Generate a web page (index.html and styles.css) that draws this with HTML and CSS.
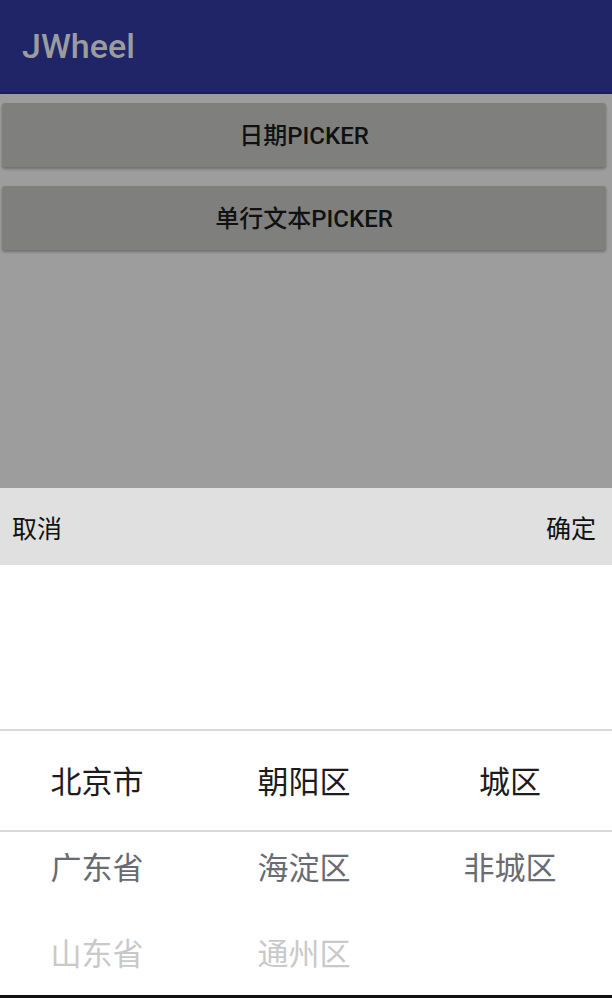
FILE: index.html
```html
<!DOCTYPE html>
<html lang="zh">
<head>
<meta charset="utf-8">
<link rel="stylesheet" href="styles.css">
</head>
<body>
<div class="screen">
  <header class="appbar"><span class="title">JWheel</span></header>
  <main class="content">
    <div class="btn">日期PICKER</div>
    <div class="btn">单行文本PICKER</div>
  </main>
  <section class="sheet">
    <div class="toolbar">
      <span class="action">取消</span>
      <span class="action">确定</span>
    </div>
    <div class="wheel">
      <div class="col">
        <div class="item sel">北京市</div>
        <div class="item near">广东省</div>
        <div class="item far">山东省</div>
      </div>
      <div class="col">
        <div class="item sel">朝阳区</div>
        <div class="item near">海淀区</div>
        <div class="item far">通州区</div>
      </div>
      <div class="col">
        <div class="item sel">城区</div>
        <div class="item near">非城区</div>
      </div>
      <div class="line line-top"></div>
      <div class="line line-bottom"></div>
    </div>
  </section>
</div>
</body>
</html>
```

FILE: styles.css
```css
* { box-sizing: border-box; }
html, body { margin: 0; padding: 0; }
body {
  width: 612px;
  height: 998px;
  overflow: hidden;
  font-family: Roboto, "Noto Sans CJK SC", sans-serif;
  background: #fff;
}
.screen {
  display: flex;
  flex-direction: column;
  height: 998px;
}
.appbar {
  flex-shrink: 0;
  height: 94px;
  background: #1f2566;
  border-bottom: 2px solid #1a1f5a;
  display: flex;
  align-items: center;
  padding-left: 22px;
}
.title {
  color: #9c9c9e;
  font-family: Roboto, sans-serif;
  font-weight: 500;
  font-size: 34px;
  margin-top: -1px;
}
.content {
  flex-shrink: 0;
  height: 394px;
  background: #9d9d9d;
  padding: 9px 6px 0 2px;
  display: flex;
  flex-direction: column;
  gap: 19px;
}
.btn {
  height: 64px;
  padding-bottom: 3px;
  background: #7f807e;
  border-radius: 3px;
  box-shadow: 0 2px 3px rgba(0,0,0,0.3);
  display: flex;
  align-items: center;
  justify-content: center;
  font-family: Roboto, "Noto Sans CJK SC", sans-serif;
  font-weight: 500;
  font-size: 24px;
  color: #111;
}
.sheet {
  flex: 1;
  min-height: 0;
  display: flex;
  flex-direction: column;
  background: #fff;
  border-bottom: 3px solid #111;
}
.toolbar {
  flex-shrink: 0;
  height: 77px;
  background: #e0e0e0;
  display: flex;
  justify-content: space-between;
  align-items: center;
  padding: 0 16px 0 12px;
}
.action {
  font-family: "Noto Sans CJK SC", sans-serif;
  font-size: 25px;
  color: #111;
}
.wheel {
  position: relative;
  flex: 1;
  min-height: 0;
  overflow: hidden;
  display: grid;
  grid-template-columns: 194px 220px 192px;
}
.col {
  display: flex;
  flex-direction: column;
  padding-top: 172px;
}
.item {
  flex-shrink: 0;
  height: 86px;
  line-height: 86px;
  text-align: center;
  font-family: "Noto Sans CJK SC", sans-serif;
  font-size: 31px;
}
.sel { color: #1c1c1c; }
.near { color: #686b72; }
.far { color: #c9c9c9; }
.line {
  position: absolute;
  left: 0;
  right: 0;
  height: 2px;
  background: #d9d9d9;
}
.line-top { top: 164px; }
.line-bottom { top: 265px; }
```
